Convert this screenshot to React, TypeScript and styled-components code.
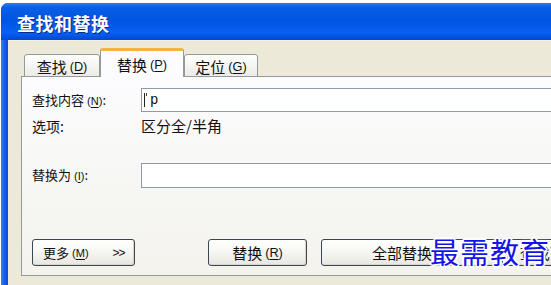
import React from "react";
import styled, { createGlobalStyle } from "styled-components";

const Global = createGlobalStyle`
  html, body { margin: 0; padding: 0; background: #fff; }
  body { font-family: "Noto Sans CJK SC", "Liberation Sans", sans-serif; }
`;

const Root = styled.div`
  position: relative;
  width: 551px;
  height: 285px;
  overflow: hidden;
  background: #fff;
  padding: 3px 0 0 1px;
  box-sizing: border-box;
`;

const Frame = styled.div`
  display: flex;
  flex-direction: column;
  height: 282px;
  background: #0a55e0;
  border-top-left-radius: 7px;
  overflow: hidden;
`;

const TitleBar = styled.div`
  height: 37px;
  flex: none;
  box-sizing: border-box;
  padding: 3px 0 0 16px;
  display: flex;
  align-items: center;
  background: linear-gradient(
    180deg,
    #2a7cf0 0%,
    #0a5ee6 12%,
    #0055e0 45%,
    #0860f2 80%,
    #0048d0 100%
  );
  color: #fff;
  font-size: 18px;
  font-weight: 700;
  letter-spacing: 0.5px;
  text-shadow: 1px 1px 0 #0a2a8a;
`;

const Body = styled.div`
  flex: 1;
  display: flex;
  min-height: 0;
`;

const SideBorder = styled.div`
  width: 7px;
  flex: none;
  background: linear-gradient(90deg, #3a7ef0, #1458e0 60%, #0c4fd6);
`;

const Content = styled.div`
  flex: 1;
  background: #ece9d8;
  border-top: 1px solid #f4f2e8;
  padding: 7px 0 0 13px;
  overflow: hidden;
  display: flex;
  flex-direction: column;
`;

const TabRow = styled.div`
  display: flex;
  align-items: flex-end;
  height: 29px;
  padding-left: 3px;
  margin-bottom: -1px;
  position: relative;
  z-index: 1;
`;

const Tab = styled.div<{ $w: number; $active?: boolean }>`
  width: ${(p) => p.$w}px;
  height: ${(p) => (p.$active ? 29 : 23)}px;
  box-sizing: border-box;
  display: flex;
  align-items: center;
  justify-content: center;
  font-size: 15px;
  color: #111;
  border: 1px solid #919b9c;
  border-bottom: ${(p) => (p.$active ? "none" : "1px solid #919b9c")};
  border-top: ${(p) => (p.$active ? "3px solid #f6b24a" : "1px solid #919b9c")};
  border-radius: 3px 3px 0 0;
  background: ${(p) =>
    p.$active ? "#fcfcfe" : "linear-gradient(180deg, #ffffff, #ecebe5)"};
  padding-top: ${(p) => (p.$active ? 0 : 1)}px;
`;

const Key = styled.span`
  font-family: "Liberation Sans", sans-serif;
  font-size: 0.85em;
  margin-left: 3px;
  u { text-decoration-thickness: 1px; text-underline-offset: 2px; }
`;

const Panel = styled.div`
  width: 620px;
  height: 200px;
  box-sizing: border-box;
  border: 1px solid #919b9c;
  border-right: none;
  background: linear-gradient(180deg, #fcfcfe 0%, #f6f6f3 60%, #f4f3ee 100%);
  padding: 11px 0 0 10px;
  display: flex;
  flex-direction: column;
`;

const Form = styled.div`
  display: grid;
  grid-template-columns: 109px 1fr;
  align-items: center;
`;

const Label = styled.div<{ $size?: number; $mt?: number }>`
  font-size: ${(p) => p.$size ?? 13}px;
  line-height: 18px;
  color: #111;
  margin-top: ${(p) => p.$mt ?? 0}px;
  white-space: nowrap;
`;

const Value = styled.div<{ $mt?: number }>`
  font-size: 15px;
  line-height: 18px;
  color: #111;
  margin-top: ${(p) => p.$mt ?? 0}px;
`;

const Input = styled.div<{ $h: number; $mt?: number }>`
  height: ${(p) => p.$h}px;
  box-sizing: border-box;
  border: 1px solid #8d9aa9;
  background: #fff;
  margin-top: ${(p) => p.$mt ?? 0}px;
  display: flex;
  align-items: center;
  padding-left: 2px;
  font-family: "Liberation Mono", monospace;
  font-size: 14px;
  color: #111;
`;

const Caret = styled.span`
  display: inline-block;
  position: relative;
  width: 1px;
  height: 14px;
  background: #222;
  margin-right: 5px;
  &::after {
    content: "";
    position: absolute;
    left: 2px;
    top: 0;
    width: 1px;
    height: 3px;
    background: #444;
  }
`;

const Spacer = styled.div<{ $h: number }>`
  height: ${(p) => p.$h}px;
  flex: none;
`;

const ButtonRow = styled.div`
  display: flex;
  align-items: center;
  height: 27px;
`;

const Button = styled.div<{ $w: number; $ml?: number; $size?: number; $start?: boolean }>`
  width: ${(p) => p.$w}px;
  flex: none;
  height: 27px;
  box-sizing: border-box;
  margin-left: ${(p) => p.$ml ?? 0}px;
  border: 1px solid #3c4653;
  border-radius: 3px;
  background: linear-gradient(180deg, #ffffff 0%, #f5f5f2 50%, #e8e6df 100%);
  box-shadow: inset -1px -1px 0 #d8d4c8;
  display: flex;
  align-items: center;
  justify-content: ${(p) => (p.$start ? "flex-start" : "center")};
  padding-left: ${(p) => (p.$start ? 10 : 0)}px;
  font-size: ${(p) => p.$size ?? 15}px;
  color: #111;
  white-space: nowrap;
`;

const Arrows = styled.span`
  font-family: "Liberation Sans", sans-serif;
  font-size: 12px;
  margin-left: 24px;
  letter-spacing: -1px;
`;

const Watermark = styled.div`
  position: absolute;
  left: 430px;
  top: 237px;
  font-size: 29px;
  line-height: 1;
  letter-spacing: 1px;
  color: #1414e6;
  font-family: "Noto Sans CJK SC", sans-serif;
  text-shadow: 0 0 2px #fff, 1px 1px 0 #fff, -1px -1px 0 #fff, 1px -1px 0 #fff,
    -1px 1px 0 #fff, 0 2px 1px #fff, 2px 0 1px #fff, -2px 0 1px #fff, 0 -2px 1px #fff;
`;

export default function App() {
  return (
    <>
      <Global />
      <Root>
        <Frame>
          <TitleBar>查找和替换</TitleBar>
          <Body>
            <SideBorder />
            <Content>
              <TabRow>
                <Tab $w={76}>
                  查找<Key>(<u>D</u>)</Key>
                </Tab>
                <Tab $w={84} $active>
                  替换<Key>(<u>P</u>)</Key>
                </Tab>
                <Tab $w={74}>
                  定位<Key>(<u>G</u>)</Key>
                </Tab>
              </TabRow>
              <Panel>
                <Form>
                  <Label>
                    查找内容<Key>(<u>N</u>)</Key>:
                  </Label>
                  <Input $h={24}>
                    <Caret />p
                  </Input>
                  <Label $size={14} $mt={5}>
                    选项:
                  </Label>
                  <Value $mt={5}>区分全/半角</Value>
                  <Label $mt={28}>
                    替换为<Key>(<u>I</u>)</Key>:
                  </Label>
                  <Input $h={25} $mt={28} />
                </Form>
                <Spacer $h={51} />
                <ButtonRow>
                  <Button $w={103} $size={13} $start>
                    更多<Key>(<u>M</u>)</Key>
                    <Arrows>&gt;&gt;</Arrows>
                  </Button>
                  <Button $w={99} $ml={73}>
                    替换<Key>(<u>R</u>)</Key>
                  </Button>
                  <Button $w={182} $ml={14}>
                    全部替换<Key>(<u>A</u>)</Key>
                  </Button>
                  <Button $w={120} $ml={4}>
                    查找下一处<Key>(<u>F</u>)</Key>
                  </Button>
                </ButtonRow>
              </Panel>
            </Content>
          </Body>
        </Frame>
        <Watermark>最需教育</Watermark>
      </Root>
    </>
  );
}
